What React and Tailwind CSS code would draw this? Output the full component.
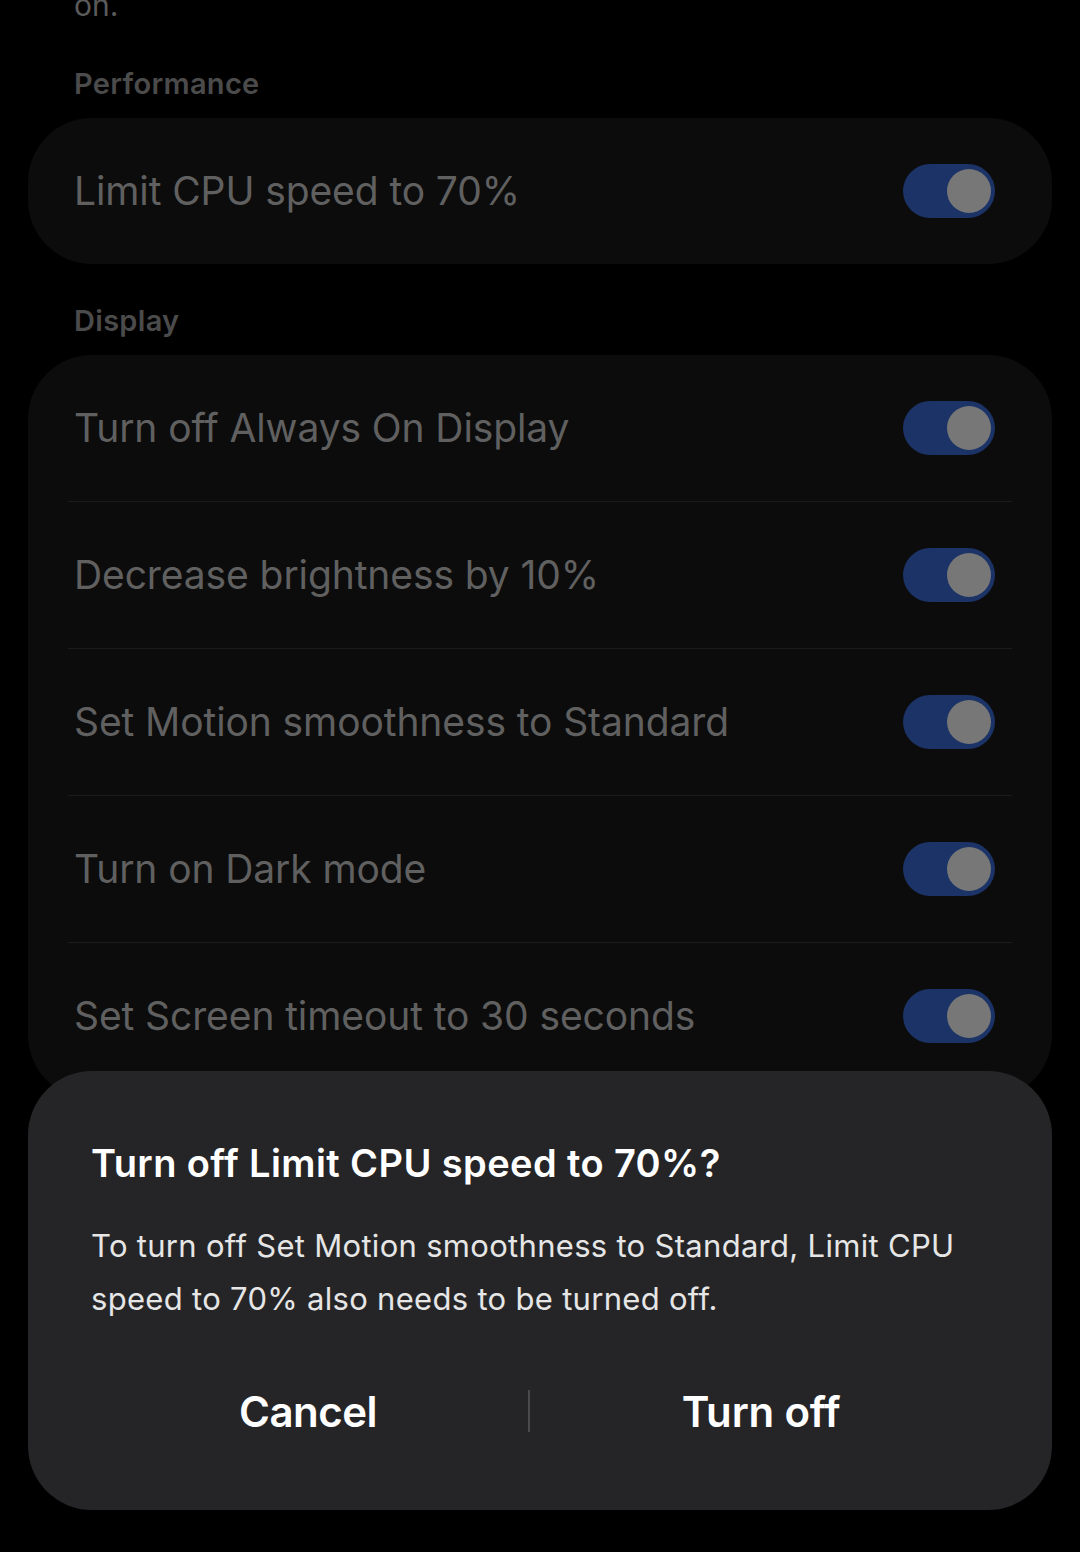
import React from 'react';

const displayItems = [
  'Turn off Always On Display',
  'Decrease brightness by 10%',
  'Set Motion smoothness to Standard',
  'Turn on Dark mode',
  'Set Screen timeout to 30 seconds',
];

const Toggle = () => (
  <div className="w-[92px] h-[54px] rounded-full bg-[#1b3366] flex items-center justify-end pr-[4px] shrink-0">
    <div className="w-[44px] h-[44px] rounded-full bg-[#777777]" />
  </div>
);

const Row = ({ label }) => (
  <div className="h-[146px] flex items-center justify-between pl-[46px] pr-[57px]">
    <span className="text-[39px] text-[#606060] tracking-[-0.1px]">{label}</span>
    <Toggle />
  </div>
);

const SectionTitle = ({ children, top }) => (
  <div className={`${top} pb-[17px] pl-[74px] text-[29px] leading-[34px] font-semibold text-[#4b4b4b] tracking-[0.3px]`}>
    {children}
  </div>
);

const App = () => {
  return (
    <div
      className="relative w-[1080px] h-[1552px] overflow-hidden bg-black"
      style={{ fontFamily: 'Inter, Roboto, "Noto Sans", sans-serif' }}
    >
      <div className="mt-[-13px] h-[36px] pl-[74px] text-[30px] leading-[36px] text-[#5a5a5a]">on.</div>

      <SectionTitle top="pt-[44px]">Performance</SectionTitle>
      <div className="mx-[28px] rounded-[64px] bg-[#0c0c0c]">
        <Row label="Limit CPU speed to 70%" />
      </div>

      <SectionTitle top="pt-[40px]">Display</SectionTitle>
      <div className="mx-[28px] rounded-[64px] bg-[#0c0c0c] pb-[10px]">
        {displayItems.map((item, i) => (
          <div key={item}>
            {i > 0 && <div className="mx-[40px] h-[1px] bg-[#1c1c1c]" />}
            <Row label={item} />
          </div>
        ))}
      </div>

      {/* confirmation sheet */}
      <div className="absolute left-[28px] right-[28px] top-[1071px] h-[439px] rounded-[64px] bg-[#252527] pt-[62px] px-[60px]">
        <div className="pl-[3px] text-[38px] leading-[60px] font-semibold text-white tracking-[0.4px]">
          Turn off Limit CPU speed to 70%?
        </div>
        <p className="mt-[26px] pl-[3px] pr-[10px] text-[31px] leading-[53px] text-[#e6e6e6] tracking-[0.3px]">
          To turn off Set Motion smoothness to Standard, Limit CPU speed to 70% also needs to be turned off.
        </p>
        <div className="mt-[46px] flex items-center h-[80px]">
          <button className="w-[440px] text-[42px] font-semibold text-white tracking-[-0.5px]">Cancel</button>
          <div className="w-[2px] h-[42px] bg-[#4a4a4c]" />
          <button className="flex-1 text-[42px] font-semibold text-white tracking-[-0.2px]">Turn off</button>
        </div>
      </div>
    </div>
  );
};

export default App;
